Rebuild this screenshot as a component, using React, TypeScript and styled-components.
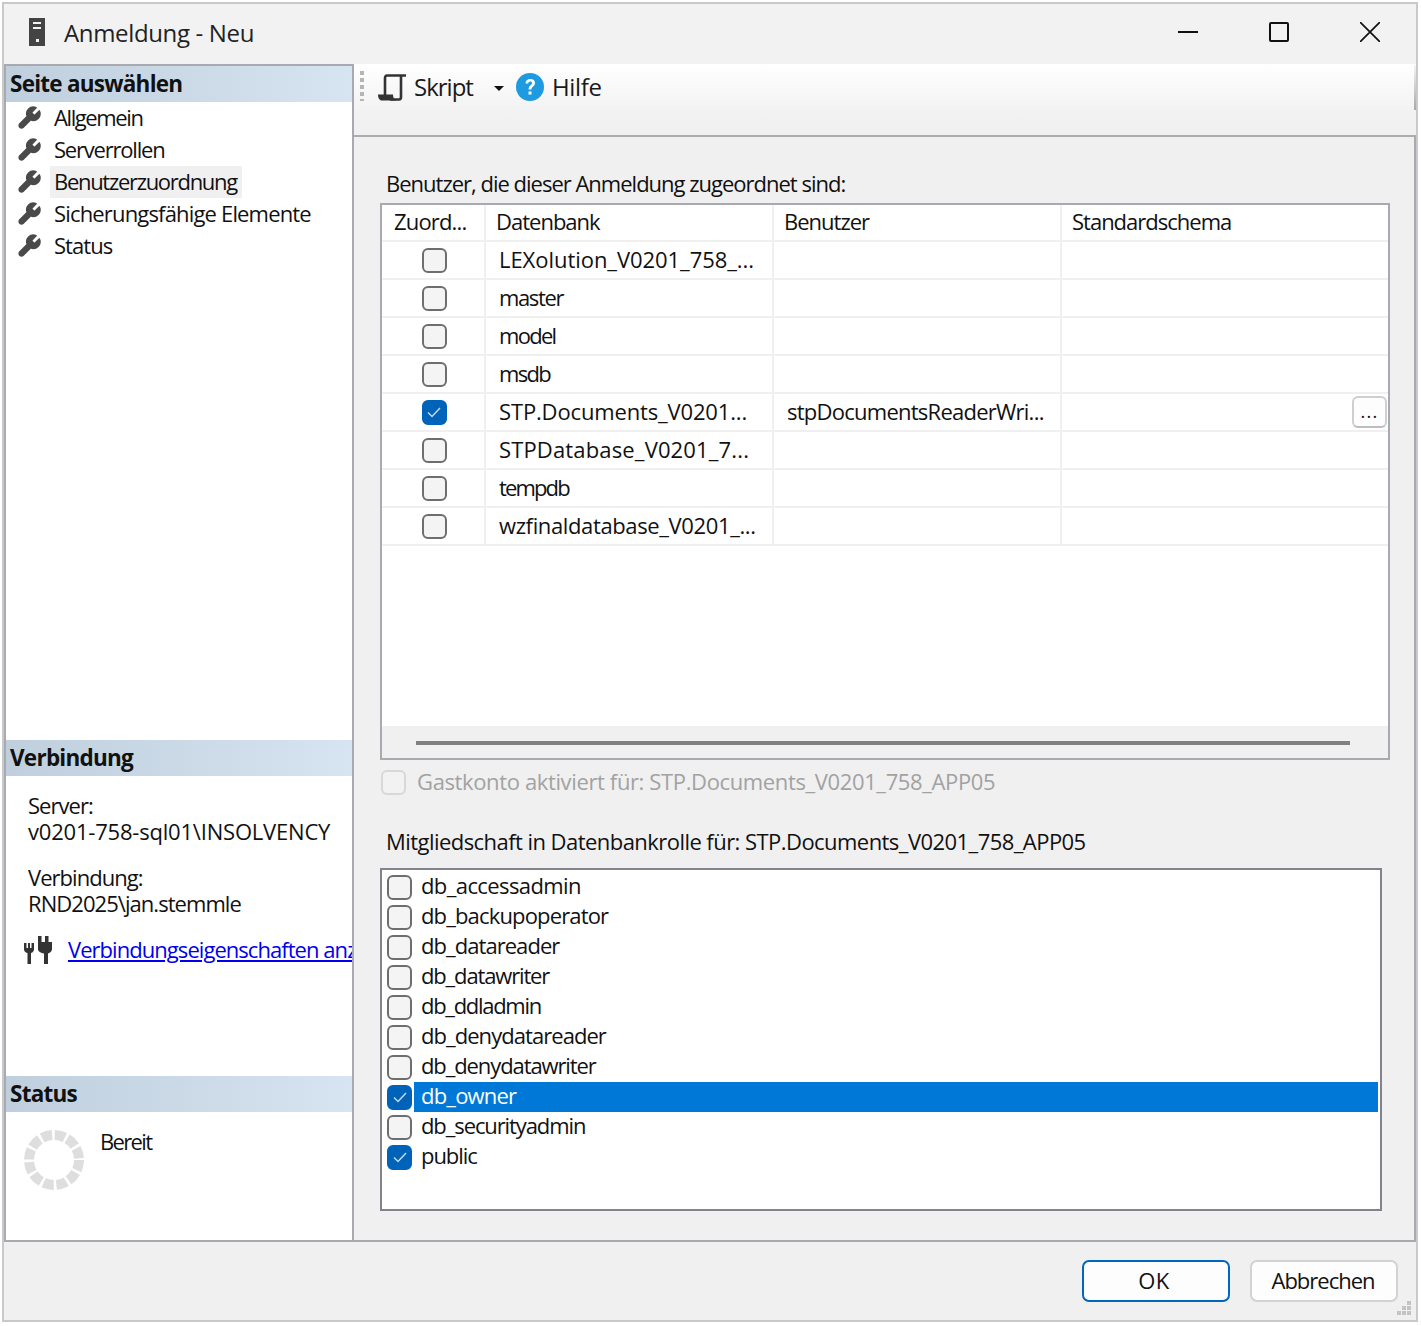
import styled, { createGlobalStyle } from 'styled-components'

const GlobalStyle = createGlobalStyle`
  html, body {
    margin: 0;
    padding: 0;
    background: #fff;
  }
  body {
    font-family: 'Open Sans', 'Noto Sans', sans-serif;
    color: #111;
  }
  * {
    box-sizing: border-box;
  }
`

const Window = styled.div`
  width: 1416px;
  height: 1320px;
  margin: 2px 0 0 2px;
  border: 2px solid #c9c9c9;
  background: #f0f0f0;
  display: flex;
  flex-direction: column;
  position: relative;
`

const TitleBar = styled.div`
  height: 60px;
  flex: none;
  display: flex;
  align-items: center;
  padding: 0 1px 4px 24px;
  background: #f2f2f2;
`

const Title = styled.div`
  margin-left: 18px;
  font-size: 24px;
  letter-spacing: -0.35px;
  color: #222;
  flex: 1;
`

const WinButton = styled.div`
  width: 91px;
  height: 56px;
  display: flex;
  align-items: center;
  justify-content: center;
`

const Body = styled.div`
  height: 1178px;
  flex: none;
  display: flex;
  border-bottom: 2px solid #a9a9b0;
`

const Sidebar = styled.div`
  width: 350px;
  flex: none;
  background: #fff;
  border: 2px solid #a9a9b0;
  border-bottom: none;
  display: flex;
  flex-direction: column;
`

const SectionHead = styled.div`
  height: 36px;
  flex: none;
  display: flex;
  align-items: center;
  padding: 0 0 2px 4px;
  font-size: 22.5px;
  font-weight: 700;
  letter-spacing: -0.75px;
  color: #111;
  background: linear-gradient(90deg, #bfcfdd, #d7e4f1);
`

const NavList = styled.div`
  flex: 1;
`

const NavRow = styled.div`
  height: 32px;
  display: flex;
  align-items: center;
  padding-left: 10px;
  gap: 8px;
`

const NavLabel = styled.div<{ $active?: boolean; $tracking: number }>`
  height: 32px;
  line-height: 30px;
  padding: 0 5px 0 4px;
  font-size: 22px;
  letter-spacing: ${p => p.$tracking}px;
  white-space: nowrap;
  background: ${p => (p.$active ? '#f0f0f0' : 'transparent')};
`

const InfoSection = styled.div`
  height: 300px;
  flex: none;
  padding: 16px 0 0 22px;
  overflow: hidden;
`

const InfoBlock = styled.div`
  font-size: 22px;
  line-height: 26px;
  letter-spacing: -0.95px;
  margin-bottom: 20px;
  white-space: nowrap;
`

const WideLine = styled.span`
  letter-spacing: -0.2px;
`

const LinkRow = styled.div`
  display: flex;
  align-items: center;
  gap: 16px;
  height: 28px;
  margin-left: -4px;
  white-space: nowrap;
`

const Link = styled.a`
  color: #0000ee;
  text-decoration: underline;
  font-size: 22px;
  letter-spacing: -0.95px;
  margin-top: -3px;
`

const StatusBody = styled.div`
  height: 128px;
  flex: none;
  display: flex;
  padding: 18px 0 0 18px;
  gap: 16px;
`

const StatusText = styled.div`
  font-size: 22px;
  line-height: 24px;
  letter-spacing: -1.65px;
  margin-top: -1px;
`

const Main = styled.div`
  flex: 1;
  display: flex;
  flex-direction: column;
  min-width: 0;
`

const Toolbar = styled.div`
  height: 73px;
  flex: none;
  display: flex;
  align-items: flex-start;
  padding: 7px 0 0 6px;
  background: linear-gradient(180deg, #fff 0, #f2f2f2 48px, #f0f0f0 100%);
  border-bottom: 2px solid #acacb0;
  font-size: 24px;
  letter-spacing: -0.6px;
  position: relative;
  &::after {
    content: '';
    position: absolute;
    top: 1px;
    right: 0;
    width: 2px;
    height: 45px;
    background: linear-gradient(180deg, #f4f4f4, #a8a8a8);
  }
`

const Grip = styled.div`
  width: 4px;
  height: 30px;
  margin-right: 14px;
  background: repeating-linear-gradient(180deg, #b5b5b5 0 4px, transparent 4px 7px);
`

const ToolItem = styled.div`
  display: flex;
  align-items: center;
  height: 32px;
  gap: 8px;
  color: #1a1a1a;
`

const ToolLabel = styled.span<{ $tracking: number }>`
  margin-top: -2px;
  letter-spacing: ${p => p.$tracking}px;
`

const Caret = styled.div`
  width: 0;
  height: 0;
  margin: 2px 12px 0 21px;
  border: 5px solid transparent;
  border-top: 5px solid #111;
  border-bottom: none;
`

const Content = styled.div`
  flex: 1;
  padding: 33px 0 0 26px;
  border-right: 2px solid #a9a9b0;
  display: flex;
  flex-direction: column;
  align-items: flex-start;
`

const Label = styled.div`
  height: 33px;
  padding-left: 6px;
  font-size: 22px;
  line-height: 26px;
  letter-spacing: -1px;
  white-space: nowrap;
`

const Grid = styled.div`
  width: 1010px;
  height: 557px;
  border: 2px solid #a9a9b0;
  background: #fff;
  display: flex;
  flex-direction: column;
  flex: none;
`

const GridRows = styled.div`
  flex: 1;
`

const GridRow = styled.div<{ $head?: boolean }>`
  display: grid;
  grid-template-columns: 104px 288px 288px 1fr;
  height: ${p => (p.$head ? '37px' : '38px')};
  border-bottom: 2px solid #f0f0f0;
`

const HeadCell = styled.div`
  border-right: 2px solid #f0f0f0;
  padding-left: 10px;
  line-height: 32px;
  font-size: 22px;
  letter-spacing: -1px;
  white-space: nowrap;
  &:first-child {
    padding-left: 12px;
    letter-spacing: -0.85px;
  }
  &:last-child {
    border-right: none;
  }
`

const Cell = styled.div<{ $tracking?: number }>`
  border-right: 2px solid #f0f0f0;
  display: flex;
  align-items: center;
  justify-content: space-between;
  padding: 0 0 2px 13px;
  font-size: 22px;
  letter-spacing: ${p => p.$tracking ?? -0.7}px;
  white-space: nowrap;
  overflow: hidden;
  &:last-child {
    border-right: none;
    padding-right: 1px;
  }
`

const CheckCell = styled(Cell)`
  justify-content: center;
  padding: 0 0 0 2px;
`

const Box = styled.div<{ $checked?: boolean; $disabled?: boolean }>`
  width: 25px;
  height: 25px;
  flex: none;
  border-radius: 6px;
  border: 2px solid ${p => (p.$checked ? '#0063ba' : p.$disabled ? '#d8d8d8' : '#6e6e6e')};
  background: ${p => (p.$checked ? '#0063ba' : p.$disabled ? '#f2f2f2' : '#f4f4f4')};
  display: flex;
  align-items: center;
  justify-content: center;
`

const MoreButton = styled.div`
  width: 35px;
  height: 32px;
  margin-top: 2px;
  border: 2px solid #cfcfcf;
  border-bottom-color: #bdbdbd;
  border-radius: 6px;
  background: #fdfdfd;
  display: flex;
  align-items: flex-end;
  justify-content: center;
  font-size: 18px;
  line-height: 19px;
  letter-spacing: 1.2px;
  padding-bottom: 5px;
`

const ScrollTrack = styled.div`
  height: 32px;
  flex: none;
  background: #f0f0f0;
  padding: 15px 38px 0 34px;
`

const ScrollThumb = styled.div`
  height: 4px;
  background: #808080;
`

const GuestRow = styled.div`
  display: flex;
  align-items: center;
  gap: 11px;
  height: 25px;
  margin-top: 10px;
  margin-left: 1px;
  font-size: 22px;
  letter-spacing: -0.37px;
  color: #a2a2a2;
  white-space: nowrap;
`

const GuestText = styled.span`
  margin-bottom: 4px;
`

const RoleLabel = styled(Label)`
  margin-top: 32px;
  height: 41px;
  line-height: 28px;
  letter-spacing: -0.55px;
`

const RoleList = styled.div`
  width: 1002px;
  height: 343px;
  flex: none;
  border: 2px solid #83838d;
  background: #fff;
  padding: 2px 2px 0 5px;
`

const RoleRow = styled.div`
  height: 30px;
  display: flex;
  align-items: center;
`

const RoleLabelText = styled.div<{ $selected?: boolean; $tracking: number }>`
  flex: 1;
  height: 30px;
  line-height: 26px;
  margin-left: 2px;
  padding-left: 7px;
  font-size: 22px;
  letter-spacing: ${p => p.$tracking}px;
  color: ${p => (p.$selected ? '#fff' : '#111')};
  background: ${p => (p.$selected ? '#0078d7' : 'transparent')};
`

const Footer = styled.div`
  flex: 1;
  display: flex;
  justify-content: flex-end;
  gap: 20px;
  padding: 18px 18px 0 0;
`

const Button = styled.div<{ $primary?: boolean }>`
  width: 148px;
  height: 42px;
  border: 2px solid ${p => (p.$primary ? '#0067c0' : '#d2d2d2')};
  border-radius: 7px;
  background: #fdfdfd;
  display: flex;
  align-items: center;
  justify-content: center;
  padding: 0 ${p => (p.$primary ? '4px' : '2px')} 2px 0;
  font-size: 22px;
  letter-spacing: ${p => (p.$primary ? '0.4px' : '-1px')};
`

const ResizeGrip = styled.svg`
  position: absolute;
  right: 4px;
  bottom: 4px;
`

const IconWrap = styled.span`
  display: flex;
  flex: none;
`

const Wrench = () => (
  <IconWrap>
    <svg width="26" height="26" viewBox="0 0 24 24" fill="#4a4a4a" stroke="#4a4a4a" strokeWidth="1.6" strokeLinejoin="round">
      <path d="M14.7 6.3a1 1 0 0 0 0 1.4l1.6 1.6a1 1 0 0 0 1.4 0l3.77-3.77a6 6 0 0 1-7.94 7.94l-6.91 6.91a2.12 2.12 0 0 1-3-3l6.91-6.91a6 6 0 0 1 7.94-7.94l-3.76 3.76z" />
    </svg>
  </IconWrap>
)

const Check = () => (
  <svg width="14" height="11" viewBox="0 0 14 11" fill="none" stroke="#c4daf0" strokeWidth="1.5">
    <path d="M1 5.500 5 9.500 13 1" />
  </svg>
)

const ServerIcon = () => (
  <svg width="18" height="28" viewBox="0 0 18 28">
    <path fill="#444" fillRule="evenodd" d="M1 0h16v28H1zM5 4v2h8V4zM5 9v2h8V9zM8 21v3h3v-3z" />
  </svg>
)

const ScriptIcon = () => (
  <svg width="28" height="27" viewBox="0 0 28 27" fill="none" stroke="#333" strokeWidth="2.600">
    <path d="M7 21V4c0-1.500.7-2.500 2-2.500H28" />
    <path d="M23 2v21c0 1.500-.7 2.500-2 2.500H12" />
    <path d="M0 20.500h15c0 3 1 5 3 6H4c-2.500 0-4-2.500-4-6z" fill="#333" stroke="none" />
  </svg>
)

const HelpIcon = () => (
  <svg width="28" height="28" viewBox="0 0 28 28">
    <circle cx="14" cy="14" r="14" fill="#1e9ae0" />
    <path d="M9.500 10.500c0-3 2-4.500 4.800-4.500 2.800 0 4.700 1.500 4.700 4 0 3.600-3.600 3.500-3.600 6.500h-2.800c0-4.500 3.500-4.200 3.500-6.500 0-1-.7-1.600-1.900-1.600-1.200 0-1.900.7-2 2.100z" fill="#fff" />
    <rect x="12.500" y="18.500" width="3" height="3" fill="#fff" />
  </svg>
)

const PlugIcon = () => (
  <IconWrap>
    <svg width="28" height="28" viewBox="0 0 28 28" fill="#333">
      <path d="M0 7h2.500v5h1.500V7h2v5h1.500V7H10v6c0 2-1 3.500-3 4v11H3.500V17C1 16.500 0 15 0 13z" />
      <path d="M14 0h3.500v6H21V0h3.500v6H28v7c0 2-1.500 4-4 4.500V28h-4V17.500c-3-.5-6-2-6-4.500z" />
    </svg>
  </IconWrap>
)

const Spinner = () => (
  <IconWrap>
    <svg width="60" height="60" viewBox="0 0 60 60" fill="none">
      <circle cx="30" cy="30" r="25" stroke="#dedede" strokeWidth="10" strokeDasharray="10.400 2.690" />
    </svg>
  </IconWrap>
)

const pages = [
  { name: 'Allgemein', tracking: -1.4 },
  { name: 'Serverrollen', tracking: -1.2 },
  { name: 'Benutzerzuordnung', tracking: -1.3 },
  { name: 'Sicherungsfähige Elemente', tracking: -0.83 },
  { name: 'Status', tracking: -0.95 },
]

const databases = [
  { name: 'LEXolution_V0201_758_...', tracking: -0.05 },
  { name: 'master', tracking: -1.37 },
  { name: 'model', tracking: -1.7 },
  { name: 'msdb', tracking: -1.7 },
  { name: 'STP.Documents_V0201...', tracking: -0.15, user: 'stpDocumentsReaderWri...', checked: true },
  { name: 'STPDatabase_V0201_7...', tracking: 0.15 },
  { name: 'tempdb', tracking: -1.85 },
  { name: 'wzfinaldatabase_V0201_...', tracking: -0.37 },
]

const roles = [
  { name: 'db_accessadmin', tracking: -0.6 },
  { name: 'db_backupoperator', tracking: -0.85 },
  { name: 'db_datareader', tracking: -0.95 },
  { name: 'db_datawriter', tracking: -1.15 },
  { name: 'db_ddladmin', tracking: -1.3 },
  { name: 'db_denydatareader', tracking: -0.95 },
  { name: 'db_denydatawriter', tracking: -1.1 },
  { name: 'db_owner', tracking: -0.8, checked: true, selected: true },
  { name: 'db_securityadmin', tracking: -1.1 },
  { name: 'public', tracking: -1.05, checked: true },
]

const App = () => {
  return (
    <>
      <GlobalStyle />
      <Window>
        <TitleBar>
          <ServerIcon />
          <Title>Anmeldung - Neu</Title>
          <WinButton>
            <svg width="20" height="20" viewBox="0 0 20 20" stroke="#111" strokeWidth="2">
              <path d="M0 10h20" />
            </svg>
          </WinButton>
          <WinButton>
            <svg width="20" height="20" viewBox="0 0 20 20" fill="none" stroke="#111" strokeWidth="2">
              <rect x="1" y="1" width="18" height="18" rx="1" />
            </svg>
          </WinButton>
          <WinButton>
            <svg width="20" height="20" viewBox="0 0 20 20" stroke="#111" strokeWidth="1.700">
              <path d="M0 0l20 20M20 0 0 20" />
            </svg>
          </WinButton>
        </TitleBar>
        <Body>
          <Sidebar>
            <SectionHead>Seite auswählen</SectionHead>
            <NavList>
              {pages.map(page => (
                <NavRow key={page.name}>
                  <Wrench />
                  <NavLabel $active={page.name === 'Benutzerzuordnung'} $tracking={page.tracking}>
                    {page.name}
                  </NavLabel>
                </NavRow>
              ))}
            </NavList>
            <SectionHead>Verbindung</SectionHead>
            <InfoSection>
              <InfoBlock>
                Server:
                <br />
                <WideLine>v0201-758-sql01\INSOLVENCY</WideLine>
              </InfoBlock>
              <InfoBlock>
                Verbindung:
                <br />
                RND2025\jan.stemmle
              </InfoBlock>
              <LinkRow>
                <PlugIcon />
                <Link>Verbindungseigenschaften anzeigen</Link>
              </LinkRow>
            </InfoSection>
            <SectionHead>Status</SectionHead>
            <StatusBody>
              <Spinner />
              <StatusText>Bereit</StatusText>
            </StatusBody>
          </Sidebar>
          <Main>
            <Toolbar>
              <Grip />
              <ToolItem>
                <ScriptIcon />
                <ToolLabel $tracking={-1}>Skript</ToolLabel>
              </ToolItem>
              <ToolItem>
                <Caret />
              </ToolItem>
              <ToolItem>
                <HelpIcon />
                <ToolLabel $tracking={-0.3}>Hilfe</ToolLabel>
              </ToolItem>
            </Toolbar>
            <Content>
              <Label>Benutzer, die dieser Anmeldung zugeordnet sind:</Label>
              <Grid>
                <GridRows>
                  <GridRow $head>
                    <HeadCell>Zuord...</HeadCell>
                    <HeadCell>Datenbank</HeadCell>
                    <HeadCell>Benutzer</HeadCell>
                    <HeadCell>Standardschema</HeadCell>
                  </GridRow>
                  {databases.map(db => (
                    <GridRow key={db.name}>
                      <CheckCell>
                        <Box $checked={db.checked}>{db.checked && <Check />}</Box>
                      </CheckCell>
                      <Cell $tracking={db.tracking}>{db.name}</Cell>
                      <Cell $tracking={-0.75}>{db.user}</Cell>
                      <Cell>{db.checked && <><span /><MoreButton>...</MoreButton></>}</Cell>
                    </GridRow>
                  ))}
                </GridRows>
                <ScrollTrack>
                  <ScrollThumb />
                </ScrollTrack>
              </Grid>
              <GuestRow>
                <Box $disabled />
                <GuestText>Gastkonto aktiviert für: STP.Documents_V0201_758_APP05</GuestText>
              </GuestRow>
              <RoleLabel>Mitgliedschaft in Datenbankrolle für: STP.Documents_V0201_758_APP05</RoleLabel>
              <RoleList>
                {roles.map(role => (
                  <RoleRow key={role.name}>
                    <Box $checked={role.checked}>{role.checked && <Check />}</Box>
                    <RoleLabelText $selected={role.selected} $tracking={role.tracking}>
                      {role.name}
                    </RoleLabelText>
                  </RoleRow>
                ))}
              </RoleList>
            </Content>
          </Main>
        </Body>
        <Footer>
          <Button $primary>OK</Button>
          <Button>Abbrechen</Button>
        </Footer>
        <ResizeGrip width="16" height="16" viewBox="0 0 16 16" fill="#c4c4c4">
          <rect x="11" y="1" width="4" height="4" />
          <rect x="6" y="6" width="4" height="4" />
          <rect x="11" y="6" width="4" height="4" />
          <rect x="1" y="11" width="4" height="4" />
          <rect x="6" y="11" width="4" height="4" />
          <rect x="11" y="11" width="4" height="4" />
        </ResizeGrip>
      </Window>
    </>
  )
}

export default App
